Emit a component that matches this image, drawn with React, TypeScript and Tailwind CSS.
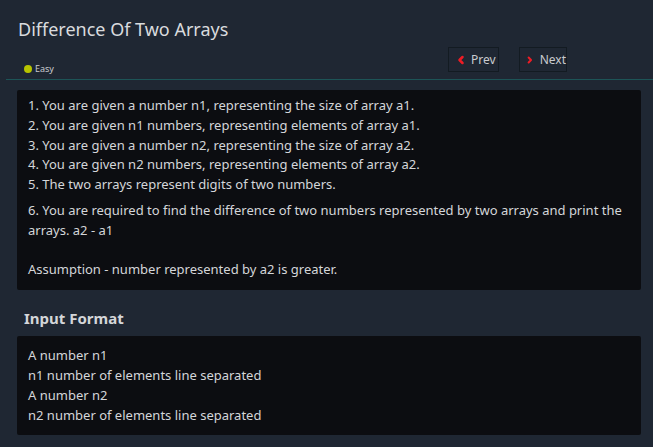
import { ChevronLeft, ChevronRight } from "lucide-react";

const statement = [
  "1. You are given a number n1, representing the size of array a1.",
  "2. You are given n1 numbers, representing elements of array a1.",
  "3. You are given a number n2, representing the size of array a2.",
  "4. You are given n2 numbers, representing elements of array a2.",
  "5. The two arrays represent digits of two numbers.",
];

const inputFormat = [
  "A number n1",
  "n1 number of elements line separated",
  "A number n2",
  "n2 number of elements line separated",
];

export default function App() {
  return (
    <div
      className="w-[653px] h-[447px] overflow-hidden bg-[#1f2733] text-[#d4d6d9]"
      style={{ fontFamily: '"Noto Sans", "Open Sans", sans-serif' }}
    >
      {/* header */}
      <div className="ml-[6px] pl-[12px] pr-[86px] pt-[16px] h-[80px] border-b border-[#1d5457]">
        <h1 className="text-[18px] leading-[26px] text-[#d9dbde]">Difference Of Two Arrays</h1>
        <div className="flex items-start justify-between mt-[5px]">
          <div className="flex items-center gap-[3px] mt-[15px] ml-[6px]">
            <span className="w-[8px] h-[8px] rounded-full bg-[#b7c400]" />
            <span className="text-[9px] text-[#c9cbcf]">Easy</span>
          </div>
          <div className="flex gap-[20px]">
            <button className="flex items-center gap-[4px] h-[25px] w-[51px] pl-[6px] border border-[#131b22] text-[12px] text-[#c9cbcf]">
              <ChevronLeft className="w-[12px] h-[12px] text-[#ee1c25]" strokeWidth={5} />
              Prev
            </button>
            <button className="flex items-center gap-[5px] h-[25px] w-[48px] pl-[5px] border border-[#131b22] text-[12px] text-[#c9cbcf]">
              <ChevronRight className="w-[12px] h-[12px] text-[#ee1c25]" strokeWidth={5} />
              Next
            </button>
          </div>
        </div>
      </div>

      <div className="pl-[17px] pr-[12px] pt-[10px]">
        <div className="bg-[#0c0d11] rounded-[2px] px-[11px] pt-[6px] pb-[10px] text-[13px] leading-[19.8px]">
          {statement.map((l) => (
            <p key={l}>{l}</p>
          ))}
          <p className="mt-[6px]">
            6. You are required to find the difference of two numbers represented by two arrays and print the
            <br />
            arrays. a2 - a1
          </p>
          <p className="mt-[19.8px]">Assumption - number represented by a2 is greater.</p>
        </div>

        <h2 className="text-[15px] font-bold text-[#d4d6d9] mt-[16px] mb-[6px] ml-[7px] leading-[24px]">Input Format</h2>

        <div className="bg-[#0c0d11] rounded-[2px] px-[11px] pt-[10px] pb-[10px] text-[13px] leading-[19.8px]">
          {inputFormat.map((l) => (
            <p key={l}>{l}</p>
          ))}
        </div>
      </div>
    </div>
  );
}
